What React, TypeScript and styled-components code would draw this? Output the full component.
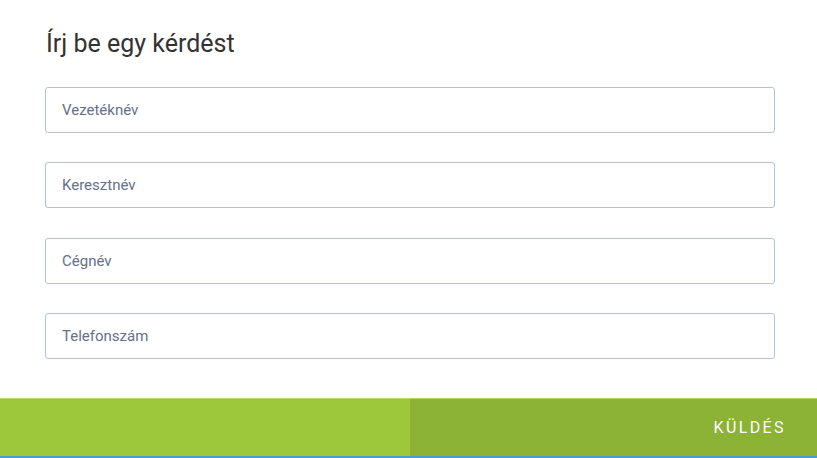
import React from 'react';
import styled, { createGlobalStyle } from 'styled-components';

const GlobalStyle = createGlobalStyle`
  html, body {
    margin: 0;
    padding: 0;
    background: #ffffff;
    font-family: Roboto, 'Liberation Sans', sans-serif;
  }
`;

const StyledPage = styled.div`
  width: 817px;
  height: 458px;
  display: flex;
  flex-direction: column;
  overflow: hidden;
`;

const StyledForm = styled.form`
  display: flex;
  flex-direction: column;
  padding: 28px 42px 0 45px;
`;

const StyledTitle = styled.h2`
  margin: 0 0 27px 1px;
  font-size: 25px;
  line-height: 32px;
  font-weight: 400;
  color: #333333;
`;

const StyledFields = styled.div`
  display: flex;
  flex-direction: column;
  gap: 29.4px;
`;

const StyledInput = styled.input`
  box-sizing: border-box;
  width: 730px;
  height: 46px;
  padding: 0 16px;
  border: 1px solid #b7c0d0;
  border-radius: 3px;
  background: #ffffff;
  font-family: Roboto, 'Liberation Sans', sans-serif;
  font-size: 15px;
  color: #333333;
  outline: none;

  &::placeholder {
    color: #65708a;
    opacity: 1;
  }
`;

const StyledBar = styled.div`
  margin-top: 38.5px;
  display: flex;
  height: 59px;
  border-top: 1px solid #b7d86e;
  border-bottom: 2px solid #4d9bd3;
`;

const StyledFiller = styled.div`
  width: 410px;
  background: #9dc83b;
`;

const StyledButton = styled.button`
  flex: 1;
  display: flex;
  align-items: center;
  justify-content: flex-end;
  padding: 0 31px 0 0;
  border: none;
  background: #8cb236;
  color: #ffffff;
  font-family: Roboto, 'Liberation Sans', sans-serif;
  font-size: 16px;
  letter-spacing: 2.4px;
  cursor: pointer;
`;

const fields = ['Vezetéknév', 'Keresztnév', 'Cégnév', 'Telefonszám'];

const App = () => {
  return (
    <StyledPage>
      <GlobalStyle />
      <StyledForm>
        <StyledTitle>Írj be egy kérdést</StyledTitle>
        <StyledFields>
          {fields.map((name) => (
            <StyledInput key={name} type="text" placeholder={name} />
          ))}
        </StyledFields>
      </StyledForm>
      <StyledBar>
        <StyledFiller />
        <StyledButton type="button">KÜLDÉS</StyledButton>
      </StyledBar>
    </StyledPage>
  );
};

export default App;
